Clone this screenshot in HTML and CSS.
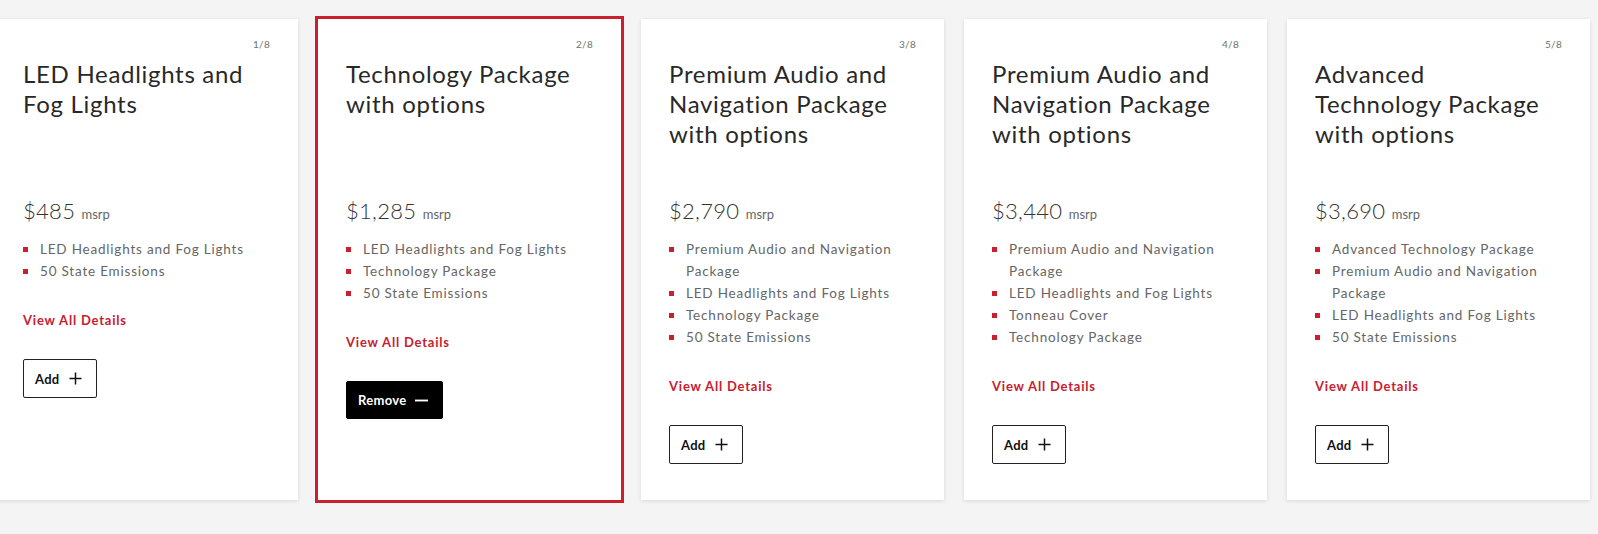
FILE: index.html
```html
<!DOCTYPE html>
<html lang="en">
<head>
<meta charset="utf-8">
<title>Packages</title>
<link rel="stylesheet" href="styles.css">
</head>
<body>
<div class="track">
  <div class="card">
    <div class="count">1/8</div>
    <h3 class="title">LED Headlights and Fog Lights</h3>
    <div class="price">$485 <span class="msrp">msrp</span></div>
    <ul class="feats">
      <li>LED Headlights and Fog Lights</li>
      <li>50 State Emissions</li>
    </ul>
    <a class="details">View All Details</a>
    <button class="btn">Add <svg class="ico" viewBox="0 0 14 14"><path d="M7 0.5V13.5M0.5 7H13.5" stroke="currentColor" stroke-width="1.6" fill="none"/></svg></button>
  </div>
  <div class="card selected">
    <div class="count">2/8</div>
    <h3 class="title">Technology Package with options</h3>
    <div class="price">$1,285 <span class="msrp">msrp</span></div>
    <ul class="feats">
      <li>LED Headlights and Fog Lights</li>
      <li>Technology Package</li>
      <li>50 State Emissions</li>
    </ul>
    <a class="details">View All Details</a>
    <button class="btn btn-remove">Remove <svg class="ico" viewBox="0 0 14 14"><path d="M0 7H14" stroke="currentColor" stroke-width="2" fill="none"/></svg></button>
  </div>
  <div class="card">
    <div class="count">3/8</div>
    <h3 class="title">Premium Audio and Navigation Package with options</h3>
    <div class="price">$2,790 <span class="msrp">msrp</span></div>
    <ul class="feats">
      <li>Premium Audio and Navigation Package</li>
      <li>LED Headlights and Fog Lights</li>
      <li>Technology Package</li>
      <li>50 State Emissions</li>
    </ul>
    <a class="details">View All Details</a>
    <button class="btn">Add <svg class="ico" viewBox="0 0 14 14"><path d="M7 0.5V13.5M0.5 7H13.5" stroke="currentColor" stroke-width="1.6" fill="none"/></svg></button>
  </div>
  <div class="card">
    <div class="count">4/8</div>
    <h3 class="title">Premium Audio and Navigation Package with options</h3>
    <div class="price">$3,440 <span class="msrp">msrp</span></div>
    <ul class="feats">
      <li>Premium Audio and Navigation Package</li>
      <li>LED Headlights and Fog Lights</li>
      <li>Tonneau Cover</li>
      <li>Technology Package</li>
    </ul>
    <a class="details">View All Details</a>
    <button class="btn">Add <svg class="ico" viewBox="0 0 14 14"><path d="M7 0.5V13.5M0.5 7H13.5" stroke="currentColor" stroke-width="1.6" fill="none"/></svg></button>
  </div>
  <div class="card">
    <div class="count">5/8</div>
    <h3 class="title">Advanced Technology Package with options</h3>
    <div class="price">$3,690 <span class="msrp">msrp</span></div>
    <ul class="feats">
      <li>Advanced Technology Package</li>
      <li>Premium Audio and Navigation Package</li>
      <li>LED Headlights and Fog Lights</li>
      <li>50 State Emissions</li>
    </ul>
    <a class="details">View All Details</a>
    <button class="btn">Add <svg class="ico" viewBox="0 0 14 14"><path d="M7 0.5V13.5M0.5 7H13.5" stroke="currentColor" stroke-width="1.6" fill="none"/></svg></button>
  </div>
</div>
</body>
</html>
```

FILE: styles.css
```css
* { box-sizing: border-box; }
html {
  overflow: hidden;
  background: #f4f4f4;
}
body {
  margin: 0;
  padding: 0;
  min-height: 100vh;
  background: #f4f4f4;
  font-family: Lato, "Open Sans", "Liberation Sans", sans-serif;
}
.track {
  display: flex;
  gap: 20px;
  padding: 19px 0 30px;
  margin-left: -5px;
}
.card {
  flex: 0 0 303px;
  width: 303px;
  height: 481px;
  background: #fff;
  padding: 19px 28px 0;
  box-shadow: 0 1px 4px rgba(0, 0, 0, 0.12);
  display: flex;
  flex-direction: column;
  align-items: flex-start;
}
.card.selected {
  box-shadow: 0 0 0 3px #c8202e;
}
.count {
  align-self: stretch;
  text-align: right;
  font-size: 10px;
  line-height: 12px;
  color: #707070;
  letter-spacing: 0.3px;
}
.title {
  margin: 9px 0 0;
  height: 90px;
  width: 232px;
  font-size: 24px;
  line-height: 30px;
  font-weight: 400;
  letter-spacing: 0.7px;
  color: #282828;
}
.price {
  margin-top: 48px;
  font-size: 22px;
  line-height: 28px;
  font-weight: 300;
  color: #333;
  letter-spacing: 0.3px;
}
.msrp {
  font-size: 13px;
  font-weight: 400;
  color: #666;
  letter-spacing: 0;
}
.feats {
  list-style: none;
  margin: 10px 0 0;
  padding: 0;
}
.feats li {
  position: relative;
  padding-left: 17px;
  font-size: 13.5px;
  line-height: 22px;
  color: #666;
  letter-spacing: 0.8px;
}
.feats li::before {
  content: "";
  position: absolute;
  left: 0;
  top: 9px;
  width: 5px;
  height: 5px;
  background: #c8202e;
}
.details {
  margin-top: 28px;
  font-size: 13px;
  line-height: 20px;
  font-weight: 700;
  color: #c8202e;
  letter-spacing: 0.8px;
}
.btn {
  margin-top: 29px;
  height: 39px;
  display: inline-flex;
  align-items: center;
  gap: 9px;
  padding: 0 14px 0 11px;
  background: #fff;
  border: 1px solid #222;
  border-radius: 2px;
  font-family: inherit;
  font-size: 13px;
  font-weight: 700;
  color: #111;
  letter-spacing: 0.3px;
}
.btn-remove {
  background: #000;
  border-color: #000;
  color: #fff;
  height: 38px;
}
.ico {
  width: 13px;
  height: 13px;
}
```
